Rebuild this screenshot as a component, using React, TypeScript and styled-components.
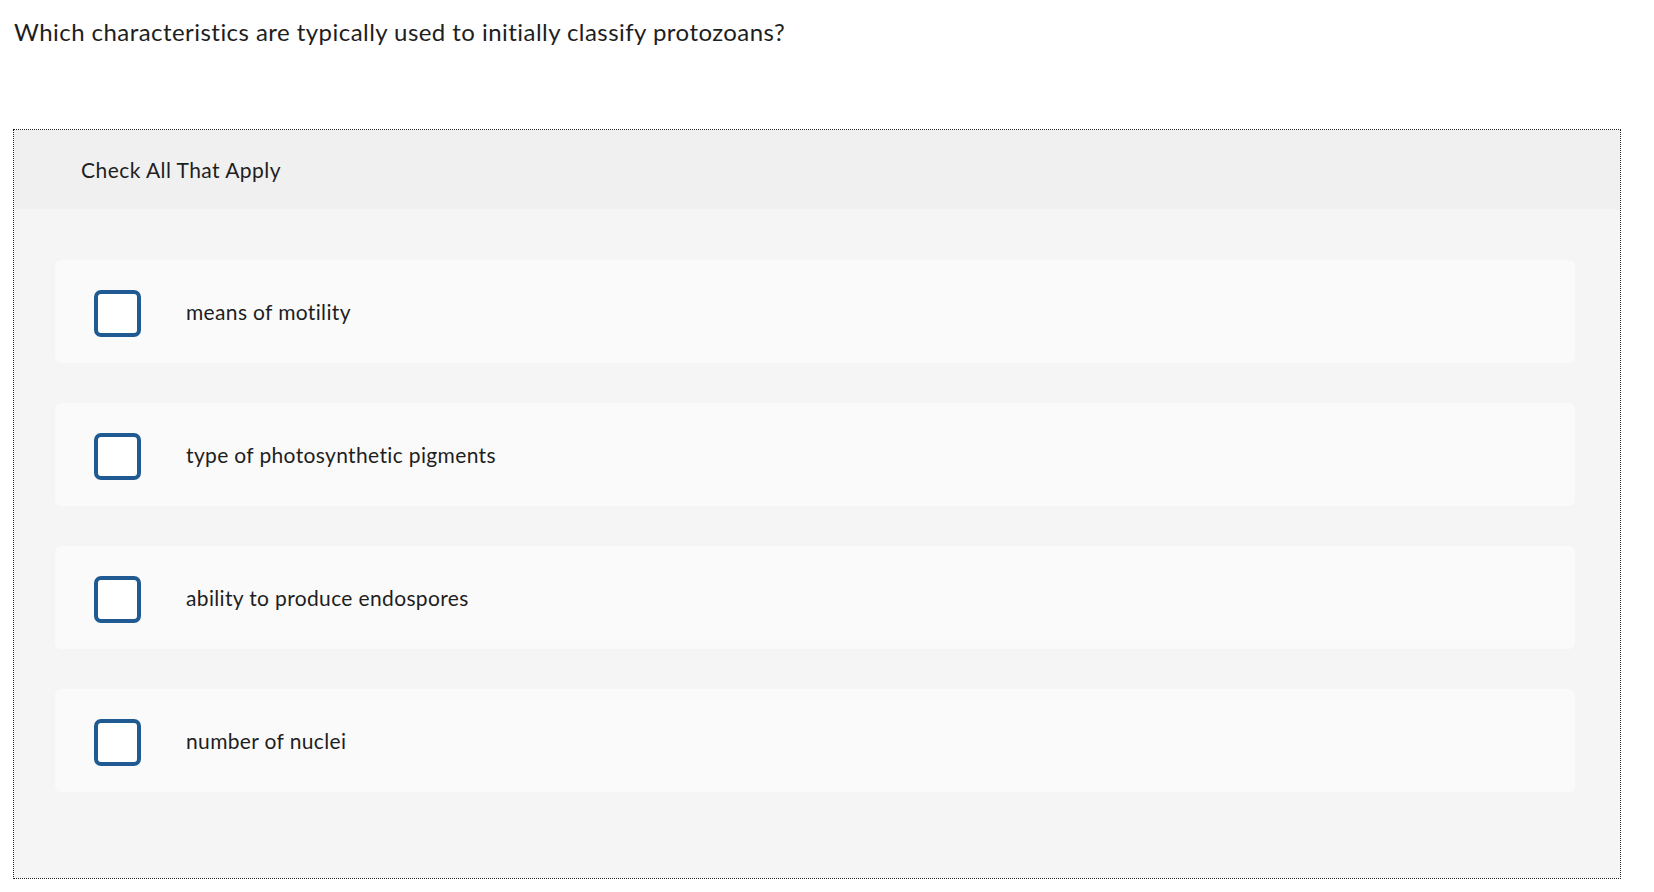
import React from "react";
import styled, { createGlobalStyle } from "styled-components";

const Global = createGlobalStyle`
  html, body { margin: 0; padding: 0; background: #ffffff; }
  body { font-family: Lato, "Open Sans", Arial, sans-serif; color: #1e1e1e; }
`;

const Page = styled.main`
  display: flex;
  flex-direction: column;
  padding: 0 33px 0 13px;
`;

const Question = styled.h1`
  margin: 0;
  padding: 17px 0 0 1px;
  font-size: 24px;
  line-height: 30px;
  font-weight: 400;
  letter-spacing: 0.45px;
  color: #1e1e1e;
  height: 129px;
  box-sizing: border-box;
`;

const Box = styled.section`
  border: 1px dotted #222;
  display: flex;
  flex-direction: column;
`;

const Header = styled.div`
  height: 79px;
  background: #f0f0f0;
  display: flex;
  align-items: center;
  padding-left: 67px;
  font-size: 21px;
  letter-spacing: 0.45px;
  color: #1e1e1e;
`;

const Body = styled.div`
  background: #f5f5f5;
  padding: 51px 45px 86px 41px;
  display: flex;
  flex-direction: column;
  gap: 40px;
`;

const Option = styled.label`
  height: 103px;
  background: #fafafa;
  border-radius: 6px;
  display: flex;
  align-items: center;
  gap: 45px;
  padding-left: 39px;
  font-size: 21px;
  letter-spacing: 0.35px;
  color: #1e1e1e;
  cursor: pointer;
`;

const Check = styled.span`
  width: 47px;
  height: 47px;
  box-sizing: border-box;
  border: 4px solid #1f5a92;
  border-radius: 7px;
  background: #ffffff;
  flex-shrink: 0;
  margin-top: 3px;
`;

const options = [
  "means of motility",
  "type of photosynthetic pigments",
  "ability to produce endospores",
  "number of nuclei",
];

export default function App() {
  return (
    <>
      <Global />
      <Page>
        <Question>Which characteristics are typically used to initially classify protozoans?</Question>
        <Box>
          <Header>Check All That Apply</Header>
          <Body>
            {options.map((o) => (
              <Option key={o}>
                <Check />
                <span>{o}</span>
              </Option>
            ))}
          </Body>
        </Box>
      </Page>
    </>
  );
}
